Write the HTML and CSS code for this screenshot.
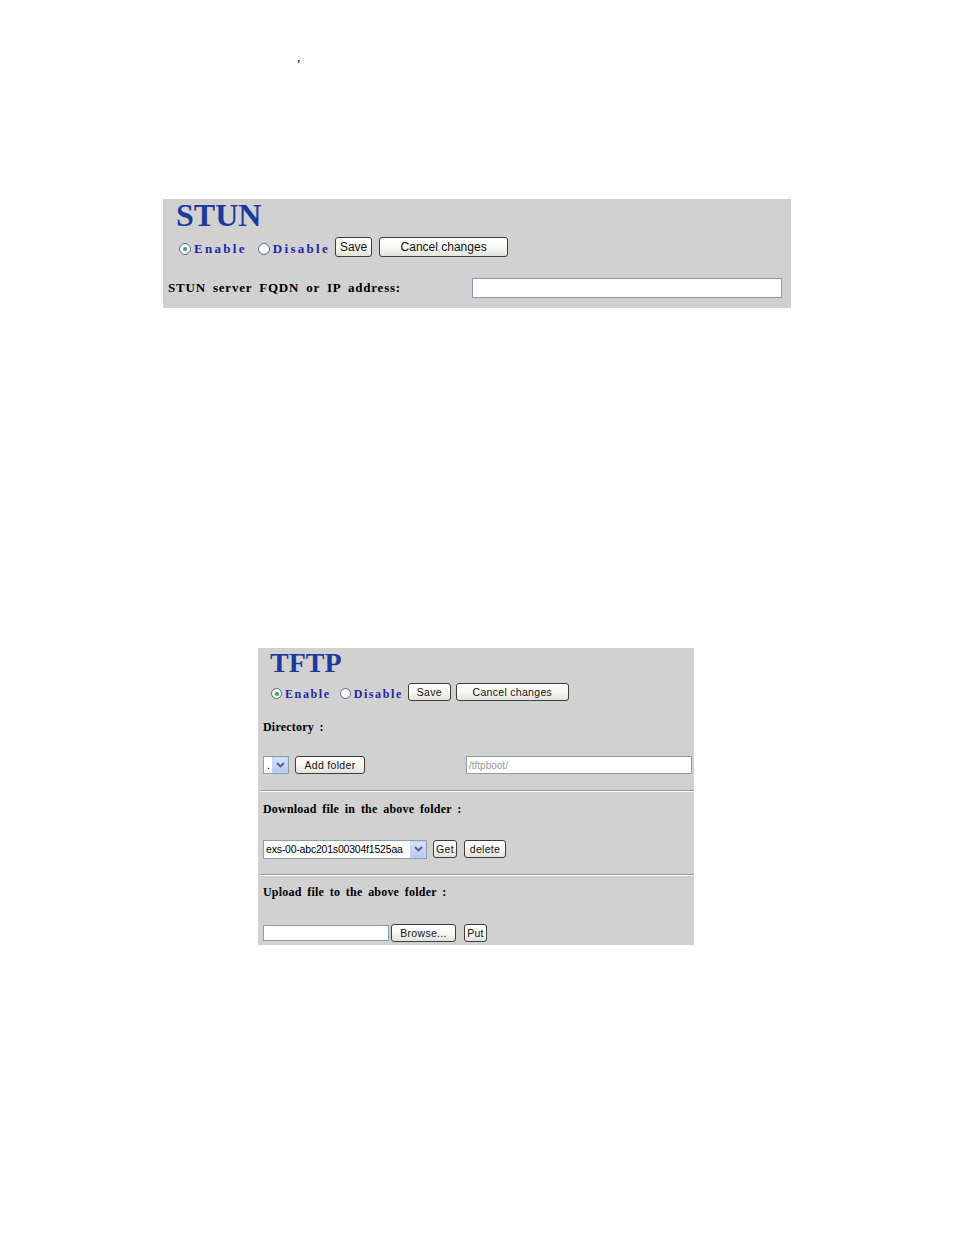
FILE: index.html
```html
<!DOCTYPE html>
<html>
<head>
<meta charset="utf-8">
<link rel="stylesheet" href="styles.css">
</head>
<body>
<div class="note">,</div>

<div class="panel stun">
  <div class="title stun-title">STUN</div>
  <div class="radio-row stun-radios">
    <span class="radio checked"></span><span class="rlabel">Enable</span>
    <span class="radio second"></span><span class="rlabel">Disable</span>
    <button class="btn big save-big">Save</button>
    <button class="btn big cancel-big">Cancel changes</button>
  </div>
  <div class="field-row">
    <span class="label big-label">STUN server FQDN or IP address:</span>
    <span class="textbox stun-input"></span>
  </div>
</div>

<div class="panel tftp">
  <div class="title tftp-title">TFTP</div>
  <div class="radio-row tftp-radios">
    <span class="radio small checked"></span><span class="rlabel small">Enable</span>
    <span class="radio small second"></span><span class="rlabel small">Disable</span>
    <button class="btn sm save-sm">Save</button>
    <button class="btn sm cancel-sm">Cancel changes</button>
  </div>
  <div class="row label-row dir-row"><span class="label">Directory :</span></div>
  <div class="row ctrl-row dir-ctrls">
    <span class="select dot-select"><span class="sval">.</span><span class="arrow"><svg width="9" height="6" viewBox="0 0 9 6"><path d="M1 1 L4.5 4.5 L8 1" fill="none" stroke="#4d6185" stroke-width="1.8"/></svg></span></span>
    <button class="btn sm add-folder">Add folder</button>
    <span class="textbox path-input">/tftpboot/</span>
  </div>
  <div class="sep"></div>
  <div class="row label-row dl-row"><span class="label">Download file in the above folder :</span></div>
  <div class="row ctrl-row dl-ctrls">
    <span class="select file-select"><span class="sval">exs-00-abc201s00304f1525aa</span><span class="arrow"><svg width="9" height="6" viewBox="0 0 9 6"><path d="M1 1 L4.5 4.5 L8 1" fill="none" stroke="#4d6185" stroke-width="1.8"/></svg></span></span>
    <button class="btn sm get-btn">Get</button>
    <button class="btn sm del-btn">delete</button>
  </div>
  <div class="sep"></div>
  <div class="row label-row up-row"><span class="label">Upload file to the above folder :</span></div>
  <div class="row ctrl-row up-ctrls">
    <span class="textbox file-input"></span>
    <button class="btn sm browse-btn">Browse...</button>
    <button class="btn sm put-btn">Put</button>
  </div>
</div>
</body>
</html>
```

FILE: styles.css
```css
html, body {
  margin: 0;
  padding: 0;
  background: #ffffff;
}
body {
  width: 954px;
  height: 1235px;
  font-family: "Liberation Serif", "Times New Roman", serif;
  color: #000;
}
.note {
  box-sizing: border-box;
  height: 199px;
  padding: 50px 0 0 297px;
  font-size: 13px;
  line-height: 13px;
}
.panel {
  background: #d1d1d1;
  box-sizing: border-box;
}
.stun {
  margin-left: 163px;
  width: 628px;
  height: 109px;
}
.tftp {
  margin-top: 340px;
  margin-left: 258px;
  width: 436px;
  height: 297px;
}
.title {
  font-weight: bold;
  color: #1b3a9c;
}
.stun-title {
  height: 32px;
  line-height: 32px;
  font-size: 32px;
  padding-left: 13px;
}
.tftp-title {
  height: 30px;
  line-height: 30px;
  font-size: 28px;
  padding-left: 12px;
}
.radio-row {
  display: flex;
  align-items: center;
}
.stun-radios {
  height: 32px;
  padding-left: 16px;
}
.tftp-radios {
  height: 28px;
  padding-left: 13px;
}
.radio {
  position: relative;
  box-sizing: border-box;
  width: 12px;
  height: 12px;
  border: 1px solid #5b6f8e;
  border-radius: 50%;
  background: radial-gradient(circle at 40% 40%, #ffffff 40%, #e3e3dc 100%);
  margin-top: 3px;
}
.radio.small {
  width: 11px;
  height: 11px;
}
.radio.checked::after {
  content: "";
  position: absolute;
  left: 3px;
  top: 3px;
  width: 4px;
  height: 4px;
  border-radius: 50%;
  background: #33a852;
}
.radio.small.checked::after {
  left: 2.5px;
  top: 2.5px;
}
.rlabel {
  font-weight: bold;
  color: #2325a8;
  font-size: 13px;
  letter-spacing: 2.3px;
  margin-left: 3px;
  padding-top: 4px;
}
.rlabel.small {
  font-size: 12px;
  letter-spacing: 1.6px;
  margin-left: 3px;
}
.stun-radios .second { margin-left: 11px; }
.tftp-radios .second { margin-left: 9px; }
.btn {
  box-sizing: border-box;
  font-family: "Liberation Sans", Arial, sans-serif;
  color: #111;
  border: 1px solid #3e3e3e;
  border-radius: 3px;
  background: linear-gradient(#ffffff 0%, #f6f6f2 55%, #e2e2da 100%);
  padding: 0;
  margin: 0;
  text-align: center;
}
.btn.big {
  height: 20px;
  font-size: 12px;
}
.btn.sm {
  height: 18px;
  font-size: 10.5px;
  letter-spacing: 0.3px;
}
.save-big { width: 37px; margin-left: 5px; }
.cancel-big { width: 129px; margin-left: 7px; }
.save-sm { width: 43px; margin-left: 5px; }
.cancel-sm { width: 113px; margin-left: 5px; }
.field-row {
  display: flex;
  align-items: center;
  justify-content: space-between;
  height: 40px;
  margin-top: 5px;
  padding: 0 9px 0 5px;
}
.label {
  font-weight: bold;
  font-size: 12px;
  letter-spacing: 0.2px;
  word-spacing: 2.5px;
}
.big-label {
  font-size: 13px;
  letter-spacing: 0.8px;
  word-spacing: 3px;
}
.textbox {
  box-sizing: border-box;
  display: flex;
  align-items: center;
  background: #fff;
  border: 1px solid #8a9db3;
  font-family: "Liberation Sans", Arial, sans-serif;
}
.stun-input {
  width: 310px;
  height: 20px;
}
.row {
  display: flex;
  align-items: center;
  padding-left: 5px;
}
.dir-row { height: 42px; }
.dir-ctrls { height: 34px; }
.dl-row { height: 34px; }
.dl-ctrls { height: 34px; margin-top: 6px; }
.up-row { height: 32px; }
.up-ctrls { height: 25px; margin-top: 12px; }
.sep {
  margin: 8px 0 0 2px;
  height: 1px;
  border-top: 1px solid #9c9c94;
  background: #ffffff;
}
.select {
  box-sizing: border-box;
  display: flex;
  align-items: stretch;
  background: #fff;
  border: 1px solid #8a9db3;
  font-family: "Liberation Sans", Arial, sans-serif;
  font-size: 11px;
}
.sval {
  flex: 1;
  display: flex;
  align-items: center;
  padding-left: 3px;
  white-space: nowrap;
  overflow: hidden;
}
.file-select .sval {
  font-size: 10.5px;
  letter-spacing: -0.2px;
  padding-left: 2px;
}
.arrow {
  width: 14px;
  flex: none;
  display: flex;
  align-items: center;
  justify-content: center;
  background: linear-gradient(#d6e1fd, #b7c9f6);
  border: 1px solid #c4d2f7;
}
.dot-select {
  width: 26px;
  height: 18px;
}
.add-folder { width: 70px; margin-left: 6px; }
.path-input {
  width: 226px;
  height: 18px;
  margin-left: 101px;
  font-size: 10px;
  color: #9a9a9a;
  padding-left: 2px;
}
.file-select {
  width: 164px;
  height: 19px;
}
.get-btn { width: 24px; margin-left: 6px; height: 18px; }
.del-btn { width: 42px; margin-left: 7px; }
.file-input {
  width: 126px;
  height: 16px;
  margin-top: 1px;
}
.browse-btn { width: 65px; margin-left: 2px; height: 16px; margin-top: 1px; font-size: 10px; letter-spacing: 0.8px; }
.put-btn { width: 23px; margin-left: 8px; height: 18px; font-size: 11px; }
```
